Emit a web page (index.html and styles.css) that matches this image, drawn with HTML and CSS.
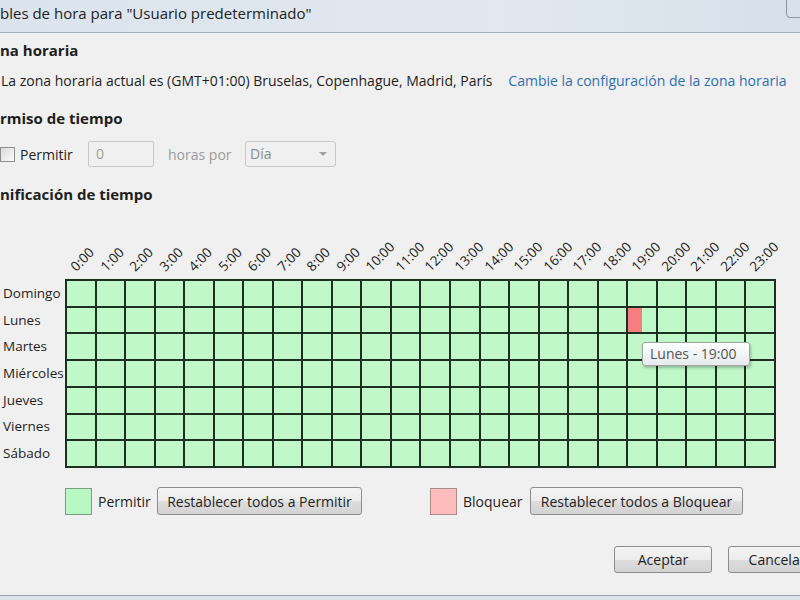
FILE: index.html
```html
<!DOCTYPE html>
<html lang="es">
<head>
    <meta charset="UTF-8">
    <title>Controles de hora</title>
    <link rel="stylesheet" href="styles.css">
</head>
<body>
<div class="dialog">
    <div class="titlebar">
        <span class="title">bles de hora para "Usuario predeterminado"</span>
        <span class="close-btn"></span>
    </div>

    <div class="content">
        <h2 class="section first">na horaria</h2>
        <div class="tz-row">
            <span>La zona horaria actual es (GMT+01:00) Bruselas, Copenhague, Madrid, París</span>
            <a class="link" href="#">Cambie la configuración de la zona horaria</a>
        </div>

        <h2 class="section">rmiso de tiempo</h2>
        <div class="permit-row">
            <span class="checkbox"></span>
            <span class="permit-label">Permitir</span>
            <span class="textbox">0</span>
            <span class="muted">horas por</span>
            <span class="select">Día<span class="arrow"></span></span>
        </div>

        <h2 class="section">nificación de tiempo</h2>

        <div class="schedule">
            <div class="corner"></div>
            <div class="hours" id="hours"></div>
            <div class="days">
                <span>Domingo</span>
                <span>Lunes</span>
                <span>Martes</span>
                <span>Miércoles</span>
                <span>Jueves</span>
                <span>Viernes</span>
                <span>Sábado</span>
            </div>
            <div class="grid-wrap">
                <div class="grid" id="grid"></div>
                <div class="tooltip">Lunes - 19:00</div>
            </div>
        </div>

        <div class="legend">
            <span class="swatch allow"></span>
            <span class="legend-label allow-label">Permitir</span>
            <button class="btn reset-allow">Restablecer todos a Permitir</button>
            <span class="swatch block"></span>
            <span class="legend-label block-label">Bloquear</span>
            <button class="btn reset-block">Restablecer todos a Bloquear</button>
        </div>

        <div class="footer">
            <button class="btn wide">Aceptar</button>
            <button class="btn wide">Cancelar</button>
        </div>
    </div>
    <div class="bottom-edge"></div>
</div>

<script>
const hours = document.getElementById('hours')
const grid = document.getElementById('grid')

for (let h = 0; h < 24; h++) {
  const cell = document.createElement('div')
  cell.className = 'hour'
  const label = document.createElement('span')
  label.innerText = h + ':00'
  cell.appendChild(label)
  hours.appendChild(cell)
}

for (let d = 0; d < 7; d++) {
  for (let h = 0; h < 24; h++) {
    const cell = document.createElement('div')
    cell.className = 'cell'
    // Lunes 19:00, first half blocked
    if (d === 1 && h === 19) {
      const half = document.createElement('span')
      half.className = 'blocked-half'
      cell.appendChild(half)
    }
    grid.appendChild(cell)
  }
}
</script>
</body>
</html>
```

FILE: styles.css
```css
*, *::before, *::after {
    box-sizing: border-box;
}
html, body {
    margin: 0;
    padding: 0;
    width: 800px;
    height: 600px;
    overflow: hidden;
    background: #dfe5ec;
}
body {
    font-family: "Open Sans", "DejaVu Sans", sans-serif;
    font-size: 14px;
    color: #1e1e1e;
}
.dialog {
    width: 830px;
    height: 600px;
    display: flex;
    flex-direction: column;
}
.titlebar {
    height: 33px;
    background: linear-gradient(90deg, #dbe3ec 0%, #e1e8ef 60%, #d6dfe8 100%);
    border-bottom: 1px solid #a9b1ba;
    display: flex;
    align-items: flex-start;
    padding-top: 3px;
    position: relative;
}
.title {
    font-size: 15px;
    color: #222;
}
.close-btn {
    position: absolute;
    left: 786px;
    top: -4px;
    width: 40px;
    height: 22px;
    border: 1px solid #8a96a3;
    border-radius: 4px;
    background: #d9e1ea;
}
.content {
    flex: 1;
    background: #f0f0f0;
    padding-left: 1px;
}
.section {
    margin: 0;
    font-size: 15px;
    font-weight: bold;
    line-height: 20px;
    margin-left: -1px;
    margin-top: 17px;
}
.section.first {
    margin-top: 7px;
}
.tz-row {
    display: flex;
    margin-top: 11px;
    line-height: 20px;
}
.link {
    color: #2f6fb4;
    text-decoration: none;
    margin-left: 16px;
}
.permit-row {
    display: flex;
    align-items: center;
    margin-top: 13px;
    height: 26px;
    margin-left: -1px;
}
.checkbox {
    width: 15px;
    height: 15px;
    border: 1px solid #8e8f8f;
    background: linear-gradient(135deg, #dcdcdc, #fafafa);
}
.permit-label {
    margin-left: 5px;
    width: 68px;
}
.textbox {
    width: 66px;
    height: 26px;
    border: 1px solid #c9c9c9;
    border-radius: 2px;
    color: #9c9c9c;
    padding: 2px 7px;
}
.muted {
    color: #9c9c9c;
    margin-left: 14px;
    width: 77px;
}
.select {
    position: relative;
    width: 91px;
    height: 26px;
    border: 1px solid #c9c9c9;
    border-radius: 3px;
    color: #8a8a8a;
    padding: 2px 4px;
}
.arrow {
    position: absolute;
    right: 8px;
    top: 10px;
    border-left: 4px solid transparent;
    border-right: 4px solid transparent;
    border-top: 4px solid #a0a0a0;
}
.schedule {
    display: grid;
    grid-template-columns: 64px 711px;
    grid-template-rows: 75px 189px;
}
.hours {
    display: grid;
    grid-template-columns: repeat(24, 1fr);
    padding: 0 2px;
    column-gap: 2px;
}
.hour {
    position: relative;
}
.hour span {
    position: absolute;
    left: 12px;
    bottom: 4px;
    font-size: 13.5px;
    color: #222;
    white-space: nowrap;
    transform: rotate(-45deg);
    transform-origin: left bottom;
}
.days {
    display: flex;
    flex-direction: column;
    padding: 2px 0 0 2px;
    font-size: 13.5px;
}
.days span {
    height: 26.7px;
    line-height: 25px;
}
.grid-wrap {
    position: relative;
}
.grid {
    display: grid;
    grid-template-columns: repeat(24, 1fr);
    grid-template-rows: repeat(7, 1fr);
    gap: 2px;
    padding: 2px;
    width: 711px;
    height: 189px;
    background: #1d2f1f;
}
.cell {
    background: #c0f8c9;
    display: flex;
}
.blocked-half {
    width: 50%;
    background: #f57f7f;
}
.tooltip {
    position: absolute;
    left: 577px;
    top: 63px;
    width: 108px;
    height: 24px;
    border: 1px solid #a3a3a3;
    border-radius: 3px;
    background: linear-gradient(#ffffff, #e6e9ee);
    box-shadow: 1px 2px 3px rgba(0, 0, 0, 0.25);
    color: #555;
    font-size: 14px;
    line-height: 22px;
    padding-left: 7px;
}
.legend {
    display: flex;
    align-items: center;
    margin-top: 19px;
    padding-left: 64px;
    height: 28px;
}
.swatch {
    width: 27px;
    height: 27px;
    border: 1px solid #77a07d;
}
.swatch.allow {
    background: #b9f7c5;
}
.swatch.block {
    background: #ffbcbc;
    border-color: #a88b8b;
    margin-left: 68px;
}
.legend-label {
    margin-left: 6px;
    margin-right: 6px;
    white-space: nowrap;
}
.allow-label {
    width: 53px;
}
.block-label {
    width: 61px;
}
.btn {
    font-family: inherit;
    font-size: 14px;
    color: #1e1e1e;
    height: 28px;
    padding: 0 8px;
    border: 1px solid #8c8c8c;
    border-radius: 3px;
    background: linear-gradient(#f4f4f4 0%, #ececec 50%, #dddddd 51%, #d3d3d3 100%);
}
.reset-allow {
    width: 205px;
}
.reset-block {
    width: 213px;
}
.footer {
    display: flex;
    justify-content: flex-start;
    gap: 16px;
    padding-left: 613px;
    margin-top: 31px;
}
.btn.wide {
    width: 98px;
    height: 27px;
}
.bottom-edge {
    height: 5px;
    border-top: 1px solid #9da3aa;
    background: #dce2e9;
}
```
